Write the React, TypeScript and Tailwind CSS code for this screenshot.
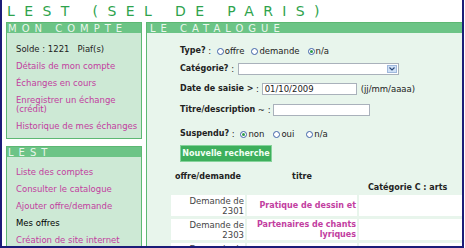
import React from "react";

const PINK = "text-[#c23e9f]";

function Radio({ checked }: { checked?: boolean }) {
  return (
    <span className="inline-flex items-center justify-center w-[7px] h-[7px] rounded-full border border-[#3f63a8] bg-white mr-[1px]">
      {checked ? <span className="block w-[3px] h-[3px] rounded-full bg-[#2f9e4a]" /> : null}
    </span>
  );
}

function PanelHeader({ text, pl }: { text: string; pl: string }) {
  return (
    <div className={`h-[10px] shrink-0 bg-[#6cc486] text-[#eaf6ec] text-[10px] leading-[11px] tracking-[5px] whitespace-nowrap ${pl}`}>
      {text}
    </div>
  );
}

export default function App() {
  return (
    <div className="w-[465px] h-[248px] overflow-hidden bg-white font-['DejaVu_Sans',sans-serif] text-[8.5px] text-[#222]">
      <div className="w-[464px] h-[248px] border-l-2 border-r-2 border-b-2 border-[#1c1c78] flex flex-col overflow-hidden">
        <div className="h-[22px] shrink-0 pl-[5px] pt-[4px] text-[14px] leading-[14px] tracking-[9.4px] text-[#2ea34c] whitespace-nowrap">
          LEST (SEL DE PARIS)
        </div>
        <div className="flex flex-1 min-h-0 pl-[4px] gap-[4px] overflow-hidden">
          {/* left column */}
          <div className="w-[136px] shrink-0 flex flex-col gap-[7px]">
            <div className="shrink-0 border border-[#5db873] bg-[#cde9d5]">
              <PanelHeader text="MON COMPTE" pl="pl-[1px]" />
              <div className="px-[9px] pt-[12px] pb-[7px] flex flex-col gap-[8px] leading-[9px]">
                <div className="whitespace-nowrap">Solde : 1221&nbsp;&nbsp; Piaf(s)</div>
                <div className={PINK}>Détails de mon compte</div>
                <div className={PINK}>Échanges en cours</div>
                <div className={PINK}>Enregistrer un échange (crédit)</div>
                <div className={`${PINK} whitespace-nowrap`}>Historique de mes échanges</div>
              </div>
            </div>
            <div className="shrink-0 border border-[#5db873] bg-[#cde9d5] h-[120px]">
              <PanelHeader text="LEST" pl="pl-[1px]" />
              <div className="px-[9px] pt-[11px] flex flex-col gap-[8px] leading-[9px]">
                <div className={PINK}>Liste des comptes</div>
                <div className={PINK}>Consulter le catalogue</div>
                <div className={PINK}>Ajouter offre/demande</div>
                <div className="text-black">Mes offres</div>
                <div className={`${PINK} whitespace-nowrap`}>Création de site internet</div>
              </div>
            </div>
          </div>

          {/* main panel */}
          <div className="flex-1 min-w-0 border-l border-t border-[#5db873] bg-[#e8f5ec] flex flex-col overflow-hidden">
            <PanelHeader text="LE CATALOGUE" pl="pl-[3px]" />
            <div className="shrink-0 pl-[33px] pt-[11px] flex flex-col">
              <div className="h-[14px] flex items-center whitespace-nowrap">
                <span className="font-bold text-[8px]">Type?</span>
                <span>&nbsp;:&nbsp;</span>
                <span className="ml-[3px] flex items-center">
                  <Radio />offre
                </span>
                <span className="ml-[7px] flex items-center">
                  <Radio />demande
                </span>
                <span className="ml-[8px] flex items-center">
                  <Radio checked />n/a
                </span>
              </div>
              <div className="mt-[4px] h-[14px] flex items-center whitespace-nowrap">
                <span className="font-bold text-[8px]">Catégorie?</span>
                <span>&nbsp;:&nbsp;</span>
                <span className="ml-[1px] w-[161px] h-[12px] border border-[#a9b1bb] bg-white flex justify-end items-stretch">
                  <span className="w-[10px] my-[1px] mr-[1px] bg-[#cfe0f6] border border-[#9fb8dc] flex items-center justify-center">
                    <svg width="6" height="4" viewBox="0 0 6 4">
                      <path d="M0.5 0.5 L3 3 L5.5 0.5" stroke="#2c4a7a" strokeWidth="1.2" fill="none" />
                    </svg>
                  </span>
                </span>
              </div>
              <div className="mt-[6px] h-[14px] flex items-center whitespace-nowrap">
                <span className="font-bold text-[8px]">Date de saisie &gt;</span>
                <span>&nbsp;:&nbsp;</span>
                <span className="w-[95px] h-[12px] border border-[#a9b1bb] bg-white pl-[2px] leading-[10px]">01/10/2009</span>
                <span className="ml-[4px]">(jj/mm/aaaa)</span>
              </div>
              <div className="mt-[7px] h-[14px] flex items-center whitespace-nowrap">
                <span className="font-bold text-[8px]">Titre/description</span>
                <span>&nbsp;~ :&nbsp;</span>
                <span className="w-[97px] h-[12px] border border-[#a9b1bb] bg-white" />
              </div>
              <div className="mt-[10px] h-[14px] flex items-center whitespace-nowrap">
                <span className="font-bold text-[8px]">Suspendu?</span>
                <span>&nbsp;:&nbsp;</span>
                <span className="ml-[3px] flex items-center">
                  <Radio checked />non
                </span>
                <span className="ml-[9px] flex items-center">
                  <Radio />oui
                </span>
                <span className="ml-[12px] flex items-center">
                  <Radio />n/a
                </span>
              </div>
              <div className="mt-[4px]">
                <button className="w-[92px] h-[17px] bg-[#3daf5c] border border-[#86d39b] text-[#f2fff4] font-bold text-[8px] leading-[15px] whitespace-nowrap">
                  Nouvelle recherche
                </button>
              </div>
            </div>

            {/* table */}
            <div className="shrink-0 ml-[24px] mt-[8px] flex flex-col gap-[3px] font-bold text-[8px]">
              <div className="flex h-[14px] items-center">
                <div className="w-[74px] text-center">offre/demande</div>
                <div className="w-[110px] ml-[2px] text-center">titre</div>
              </div>
              <div className="flex h-[8px] items-center -mt-[3px]">
                <div className="w-[74px]" />
                <div className="w-[110px] ml-[2px]" />
                <div className="ml-[11px] whitespace-nowrap">Catégorie C : arts</div>
              </div>
              {[
                ["2301", "Pratique de dessin et", ""],
                ["2303", "Partenaires de chants", "lyriques"],
                ["2305", "", ""],
              ].map(([num, t1, t2]) => (
                <div key={num} className="flex h-[21px] shrink-0">
                  <div className="w-[74px] bg-white flex flex-col justify-center items-end pr-[1px] font-normal text-[8.5px] text-[#444] leading-[10px]">
                    <span className="whitespace-nowrap">Demande de</span>
                    <span>{num}</span>
                  </div>
                  <div className={`w-[110px] ml-[2px] bg-white flex flex-col justify-center items-end pr-[1px] leading-[10px] ${PINK}`}>
                    {t1 ? <span className="whitespace-nowrap">{t1}</span> : null}
                    {t2 ? <span>{t2}</span> : null}
                  </div>
                  <div className="flex-1 ml-[2px] bg-white" />
                </div>
              ))}
            </div>
          </div>
        </div>
      </div>
    </div>
  );
}
